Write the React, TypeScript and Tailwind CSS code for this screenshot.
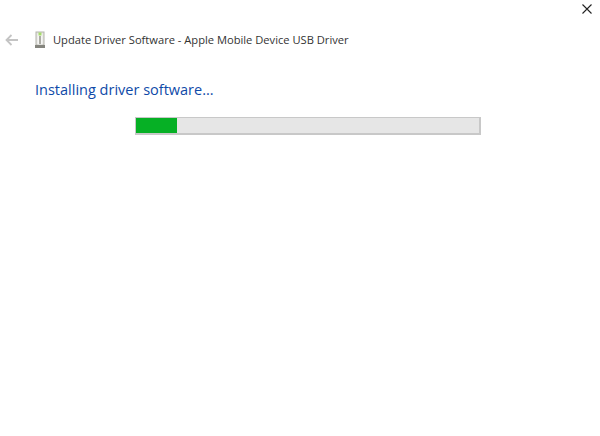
const DeviceIcon = () => (
  <svg width="12" height="18" viewBox="0 0 12 18" className="shrink-0">
    <rect x="2" y="1" width="8" height="13" fill="#e4e4e0" stroke="#b4b4ac" />
    <rect x="3.5" y="2.5" width="5" height="11" fill="#f6f6f4" />
    <rect x="4.5" y="1.5" width="3" height="3" fill="#a6dc6a" />
    <rect x="5.2" y="5" width="1.6" height="8" fill="#9a9a92" />
    <rect x="1" y="14" width="10" height="3" fill="#85857e" />
  </svg>
);

export default function App() {
  return (
    <div className="w-[600px] h-[436px] bg-white overflow-hidden font-['Open_Sans','Noto_Sans',sans-serif]">
      <div className="flex justify-end pt-[4px] pr-[8px] h-[30px]">
        <svg width="10" height="10" viewBox="0 0 10 10" className="text-[#222]">
          <path d="M0.5 0.5 9.5 9.5M9.5 0.5 0.5 9.5" stroke="currentColor" strokeWidth="1.1" fill="none" />
        </svg>
      </div>

      <div className="flex items-center h-[20px] pl-[5px]">
        <svg width="14" height="12" viewBox="0 0 14 12" className="shrink-0">
          <path d="M13 6H2M6.5 1 1.5 6l5 5" stroke="#c4c4c4" strokeWidth="1.8" fill="none" />
        </svg>
        <div className="ml-[15px]">
          <DeviceIcon />
        </div>
        <span className="ml-[7px] text-[11.15px] leading-[20px] text-[#333] whitespace-nowrap">
          Update Driver Software - Apple Mobile Device USB Driver
        </span>
      </div>

      <h1 className="mt-[30px] ml-[35px] text-[14.5px] leading-[20px] text-[#0f4aa8] whitespace-nowrap">
        Installing driver software...
      </h1>

      <div className="mt-[17px] ml-[135px] w-[346px] h-[18px] bg-[#e6e6e6] border border-r-2 border-b-2 border-[#c8c8c8]">
        <div className="w-[41px] h-full bg-[#06b025]" />
      </div>
    </div>
  );
}
